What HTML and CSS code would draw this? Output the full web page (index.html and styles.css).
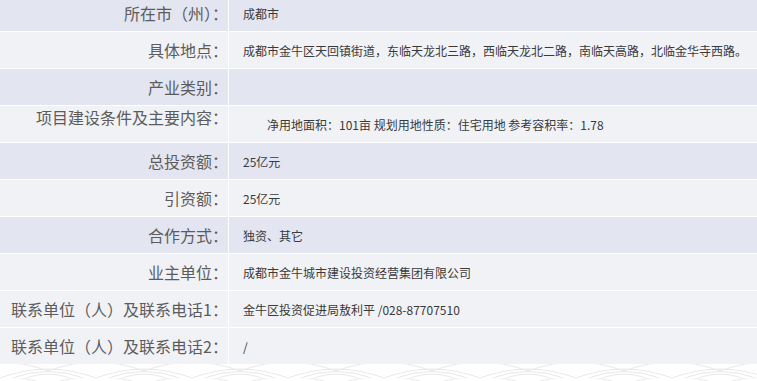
FILE: index.html
```html
<!DOCTYPE html>
<html lang="zh-CN">
<head>
<meta charset="utf-8">
<title>项目信息</title>
<link rel="stylesheet" href="styles.css">
</head>
<body>
<div class="page">
  <div class="table">
    <div class="row dark"><div class="label">所在市（州）：</div><div class="value">成都市</div></div>
    <div class="row light"><div class="label">具体地点：</div><div class="value">成都市金牛区天回镇街道，东临天龙北三路，西临天龙北二路，南临天高路，北临金华寺西路。</div></div>
    <div class="row dark"><div class="label">产业类别：</div><div class="value"></div></div>
    <div class="row light"><div class="label top">项目建设条件及主要内容：</div><div class="value indent">净用地面积：101亩 规划用地性质：住宅用地 参考容积率：1.78</div></div>
    <div class="row dark"><div class="label">总投资额：</div><div class="value">25亿元</div></div>
    <div class="row light"><div class="label">引资额：</div><div class="value">25亿元</div></div>
    <div class="row dark"><div class="label">合作方式：</div><div class="value">独资、其它</div></div>
    <div class="row light"><div class="label">业主单位：</div><div class="value">成都市金牛城市建设投资经营集团有限公司</div></div>
    <div class="row light"><div class="label">联系单位（人）及联系电话1：</div><div class="value">金牛区投资促进局敖利平 /028-87707510</div></div>
    <div class="row light"><div class="label">联系单位（人）及联系电话2：</div><div class="value">/</div></div>
  </div>
  <svg class="waves" width="757" height="24" viewBox="0 0 757 24" aria-hidden="true">
    <defs>
      <pattern id="wv" width="96" height="14" patternUnits="userSpaceOnUse">
        <g fill="none" stroke="#e8e8ec" stroke-width="1">
          <path d="M0 14 Q48 -4 96 14"/>
          <path d="M12 14 Q48 1 84 14"/>
          <path d="M26 14 Q48 6 70 14"/>
          <path d="M-48 7 Q0 -11 48 7"/>
          <path d="M48 7 Q96 -11 144 7"/>
        </g>
      </pattern>
    </defs>
    <rect x="0" y="0" width="757" height="24" fill="url(#wv)"/>
  </svg>
</div>
</body>
</html>
```

FILE: styles.css
```css
html, body {
  margin: 0;
  padding: 0;
  background: #ffffff;
  overflow: hidden;
}

.page {
  width: 757px;
  height: 381px;
  overflow: hidden;
  font-family: "Noto Sans CJK SC", "Liberation Sans", sans-serif;
}

.table {
  display: flex;
  flex-direction: column;
  gap: 1px;
  background: #ffffff;
  margin-top: -5px;
}

.row {
  display: grid;
  grid-template-columns: 228px 1fr;
  column-gap: 1px;
  height: 36px;
}

.row.dark .label,
.row.dark .value {
  background: #e3e5f0;
}

.row.light .label,
.row.light .value {
  background: #f1f2f6;
}

.label {
  font-size: 16px;
  line-height: 36px;
  text-align: right;
  color: #5c5c5c;
  white-space: nowrap;
}

.label.top {
  line-height: 22px;
}

.value {
  display: flex;
  align-items: center;
  padding-left: 14px;
  font-size: 12px;
  color: #3a3a3a;
  white-space: nowrap;
}

.value.indent {
  padding-left: 38px;
}

.waves {
  display: block;
}
```
